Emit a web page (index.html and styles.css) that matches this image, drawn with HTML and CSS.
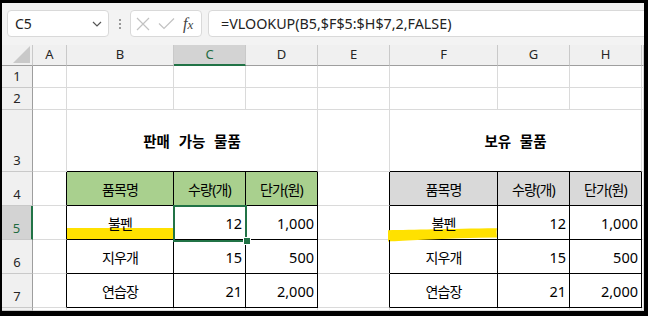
FILE: index.html
```html
<!DOCTYPE html>
<html lang="ko">
<head>
  <meta charset="UTF-8">
  <title>VLOOKUP</title>
  <link rel="stylesheet" href="styles.css">
</head>
<body>
  <div class="window">
    <div class="fbar">
      <div class="namebox">
        <span>C5</span>
        <svg class="chev" width="10" height="6" viewBox="0 0 10 6"><path d="M1 1 L5 5 L9 1" fill="none" stroke="#555" stroke-width="1.2"/></svg>
      </div>
      <div class="grip"><i></i><i></i><i></i></div>
      <div class="fxbox">
        <svg width="14" height="14" viewBox="0 0 14 14"><path d="M1 1 L13 13 M13 1 L1 13" stroke="#c2c2c2" stroke-width="1.2"/></svg>
        <svg width="17" height="13" viewBox="0 0 17 13"><path d="M1 6.5 L6 11.5 L16 1.5" fill="none" stroke="#c2c2c2" stroke-width="1.2"/></svg>
        <span class="fx">f<sub>x</sub></span>
      </div>
      <div class="formula">=VLOOKUP(B5,$F$5:$H$7,2,FALSE)</div>
    </div>

    <div class="sheet">
      <!-- column headers -->
      <div class="corner"><svg width="17" height="17" viewBox="0 0 17 17"><path d="M17 0 L17 17 L0 17 Z" fill="#c9c9c9"/></svg></div>
      <div class="ch">A</div>
      <div class="ch">B</div>
      <div class="ch on">C</div>
      <div class="ch">D</div>
      <div class="ch">E</div>
      <div class="ch">F</div>
      <div class="ch">G</div>
      <div class="ch">H</div>
      <div class="ch"></div>

      <!-- row 1 -->
      <div class="rh">1</div>
      <div class="c"></div><div class="c"></div><div class="c"></div><div class="c"></div>
      <div class="c"></div><div class="c"></div><div class="c"></div><div class="c"></div><div class="c"></div>

      <!-- row 2 -->
      <div class="rh">2</div>
      <div class="c"></div><div class="c"></div><div class="c"></div><div class="c"></div>
      <div class="c"></div><div class="c"></div><div class="c"></div><div class="c"></div><div class="c"></div>

      <!-- row 3 -->
      <div class="rh">3</div>
      <div class="c"></div>
      <div class="c title tb span3">판매 가능 물품</div>
      <div class="c"></div>
      <div class="c title tb span3">보유 물품</div>
      <div class="c"></div>

      <!-- row 4 -->
      <div class="rh">4</div>
      <div class="c tl"></div>
      <div class="c t hg ko">품목명</div>
      <div class="c t hg ko">수량(개)</div>
      <div class="c t hg ko">단가(원)</div>
      <div class="c tl"></div>
      <div class="c t hs ko">품목명</div>
      <div class="c t hs ko">수량(개)</div>
      <div class="c t hs ko">단가(원)</div>
      <div class="c"></div>

      <!-- row 5 -->
      <div class="rh on">5</div>
      <div class="c tl"></div>
      <div class="c t ko mark"><span class="txt">불펜</span><div class="hl"></div></div>
      <div class="c t num sel-cell">12<div class="sel"><div class="handle"></div></div></div>
      <div class="c t num">1,000</div>
      <div class="c tl"></div>
      <div class="c t ko mark">
        <span class="txt">불펜</span>
        <svg class="brush" width="110" height="14" viewBox="0 0 110 14"><path d="M0 2.2 C25 1.8 60 0.9 109 0.3 L108.5 4 L109 9.6 C85 10 60 10.6 35 11.8 C20 12.6 8 13.2 0 13.4 Z" fill="#ffe100"/></svg>
      </div>
      <div class="c t num">12</div>
      <div class="c t num">1,000</div>
      <div class="c"></div>

      <!-- row 6 -->
      <div class="rh">6</div>
      <div class="c tl"></div>
      <div class="c t ko">지우개</div>
      <div class="c t num">15</div>
      <div class="c t num">500</div>
      <div class="c tl"></div>
      <div class="c t ko">지우개</div>
      <div class="c t num">15</div>
      <div class="c t num">500</div>
      <div class="c"></div>

      <!-- row 7 -->
      <div class="rh">7</div>
      <div class="c tl"></div>
      <div class="c t ko">연습장</div>
      <div class="c t num">21</div>
      <div class="c t num">2,000</div>
      <div class="c tl"></div>
      <div class="c t ko">연습장</div>
      <div class="c t num">21</div>
      <div class="c t num">2,000</div>
      <div class="c"></div>

      <!-- row 8 (cut off) -->
      <div class="rh"></div>
      <div class="c"></div><div class="c"></div><div class="c"></div><div class="c"></div>
      <div class="c"></div><div class="c"></div><div class="c"></div><div class="c"></div><div class="c"></div>
    </div>
  </div>
</body>
</html>
```

FILE: styles.css
```css
* {
  margin: 0;
  padding: 0;
  box-sizing: border-box;
}

body {
  background: #000;
  font-family: "Noto Sans", "Noto Sans CJK KR", sans-serif;
  color: #000;
  width: 648px;
  height: 316px;
  overflow: hidden;
}

.window {
  margin: 3px 4px 0 2px;
  width: 642px;
  height: 308px;
  background: #fff;
  overflow: hidden;
  display: flex;
  flex-direction: column;
}

/* formula bar */
.fbar {
  height: 42px;
  background: #f3f3f3;
  display: flex;
  align-items: flex-start;
  padding-top: 7px;
  padding-left: 5px;
}

.namebox {
  width: 102px;
  height: 27px;
  background: #fff;
  border: 1px solid #d9d9d9;
  border-radius: 4px;
  display: flex;
  align-items: center;
  justify-content: space-between;
  padding: 0 6px 0 7px;
  font-size: 14px;
  color: #222;
}

.grip {
  width: 21px;
  height: 27px;
  display: flex;
  flex-direction: column;
  align-items: center;
  justify-content: center;
  gap: 2px;
}

.grip i {
  width: 2px;
  height: 2px;
  background: #999;
}

.fxbox {
  width: 72px;
  height: 27px;
  background: #fff;
  border: 1px solid #d9d9d9;
  border-radius: 4px;
  display: flex;
  align-items: center;
  padding-left: 5px;
  gap: 8px;
}

.fx {
  font-family: "Liberation Serif", serif;
  font-style: italic;
  font-size: 16px;
  color: #444;
  line-height: 1;
}

.fx sub {
  font-size: 13px;
  vertical-align: baseline;
}

.formula {
  flex: 1;
  margin-left: 6px;
  margin-right: -6px;
  height: 27px;
  background: #fff;
  border: 1px solid #d9d9d9;
  border-radius: 4px;
  padding-left: 12px;
  font-size: 14.3px;
  line-height: 25px;
  color: #222;
  white-space: nowrap;
}

/* sheet grid */
.sheet {
  flex: 1;
  display: grid;
  grid-template-columns: 31px 34px 107px 72px 72px 72px 108px 72px 72px 1fr;
  grid-template-rows: 21px 22px 22px 62px 34px 34px 34px 34px 1fr;
}

.corner {
  background: #f0f0f0;
  border-right: 1px solid #c9c9c9;
  border-bottom: 1px solid #9e9e9e;
  display: flex;
  align-items: flex-end;
  justify-content: flex-end;
  padding: 0 2px 2px 0;
}

.ch {
  background: #f0f0f0;
  border-right: 1px solid #c9c9c9;
  border-bottom: 1px solid #9e9e9e;
  font-size: 13px;
  color: #262626;
  text-align: center;
  line-height: 19px;
}

.ch.on {
  background: #d3d3d3;
  border-bottom: 2px solid #217346;
  color: #1e6b41;
}

.rh {
  background: #f0f0f0;
  border-right: 1px solid #9e9e9e;
  border-bottom: 1px solid #c9c9c9;
  font-size: 13px;
  color: #262626;
  display: flex;
  align-items: flex-end;
  justify-content: center;
  padding-bottom: 2px;
}

.rh.on {
  background: #d3d3d3;
  border-right: 2px solid #217346;
  color: #1e6b41;
}

.c {
  border-right: 1px solid #dadada;
  border-bottom: 1px solid #dadada;
  display: flex;
  align-items: center;
  justify-content: center;
  font-size: 14.5px;
  white-space: nowrap;
  position: relative;
}

.span3 {
  grid-column: span 3;
}

.title {
  font-weight: 700;
  font-size: 14.5px;
  word-spacing: 5px;
}

.tb {
  border-bottom-color: #000;
}

.tl {
  border-right-color: #000;
}

.t {
  border-right-color: #000;
  border-bottom-color: #000;
}

.hg {
  background: #a9d08e;
}

.hs {
  background: #d9d9d9;
}

.ko {
  font-size: 14px;
  letter-spacing: -0.8px;
}

.num {
  justify-content: flex-end;
  padding-right: 3px;
}

/* yellow markers */
.mark .txt {
  position: relative;
  z-index: 1;
}

.hl {
  position: absolute;
  left: 0;
  right: 0;
  bottom: 0;
  height: 11px;
  background: #ffe100;
}

.brush {
  position: absolute;
  left: -2px;
  top: 22px;
}

/* active cell */
.sel-cell {
  z-index: 2;
}

.sel {
  position: absolute;
  left: -1px;
  top: -1px;
  right: -2px;
  bottom: -3px;
  border: 2px solid #217346;
}

.handle {
  position: absolute;
  right: -5px;
  bottom: -4px;
  width: 6px;
  height: 6px;
  background: #217346;
  outline: 1px solid #fff;
}
```
